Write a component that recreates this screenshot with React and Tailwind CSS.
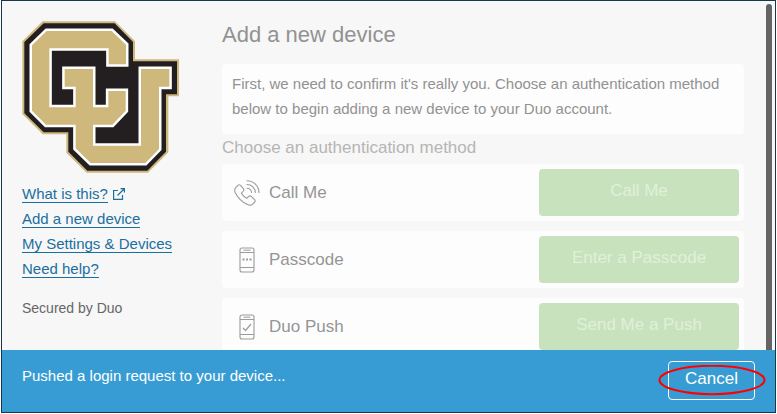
import React from 'react';

const linkClass =
  'border-b border-[#1b6f9e] text-[15px] leading-[17px] text-[#1b6f9e]';

function Logo() {
  return (
    <svg className="h-[152px] w-[158px]" viewBox="66 63 474 456" role="img" aria-label="CU">
      <path
        fill="#cfb87c"
        d="M128 64H345L405 124V178H537V289H505V457L444 518H260L199 458V403H128L67 342V124Z"
      />
      <path
        fill="#231f20"
        d="M131 70H344L399 126V184H531V283H498V455L442 512H262L205 455V397H131L73 340V126Z"
      />
      <path
        fill="#cfb87c"
        stroke="#ffffff"
        strokeWidth="15"
        paintOrder="stroke"
        d="M326 193H378V134L335 93H140L96 136V332L138 374H227V445L272 489H436L477 447V260H508V207H423V437H279V374H337L377 332V273H325V322H279V207H194V260H227V322H148V145H326Z"
      />
    </svg>
  );
}

function ExternalIcon() {
  return (
    <svg className="size-3" viewBox="0 0 12 12" fill="none" stroke="#1b6f9e" strokeWidth="1.2" aria-hidden="true">
      <path d="M5 2.5H.6V11.4H9.5V7M4.5 7.5 11 1M7.5.6H11.4V4.5" />
    </svg>
  );
}

function CallIcon() {
  return (
    <svg className="size-[26px]" viewBox="0 0 26 26" fill="none" stroke="#9b9b9b" strokeWidth="1.1" strokeLinecap="round" strokeLinejoin="round" aria-hidden="true">
      <path d="M4.2 5.2 1.7 7.7C.4 9 .5 11 1.4 13 4 18 8 22 13 24.2c2 1 4 1.3 5.4.2l2.3-2.4c.7-.7.6-1.7-.1-2.4l-3.5-3.2c-.7-.6-1.6-.6-2.3 0l-2 1.9C10.5 17.1 8.5 15.2 7.4 13.2l2-2.2c.6-.7.6-1.6 0-2.3L6.500 5.300c-.7-.7-1.6-.7-2.3-.1Z" />
      <path d="M13 .8A12 12 0 0 1 25 12.5M13 4.5A8.3 8.3 0 0 1 21.3 12.5M13 8.3A4.5 4.5 0 0 1 17.5 12.5" />
    </svg>
  );
}

function PhoneIcon({ children }) {
  return (
    <svg className="h-[26px] w-4" viewBox="0 0 16 26" fill="none" stroke="#9b9b9b" aria-hidden="true">
      <rect x="1" y="1" width="14" height="24" rx="2" strokeWidth="1.1" />
      <path d="M1 5.5H15M1 20.5H15M4.5 3.2H11.5" />
      {children}
    </svg>
  );
}

const methods = [
  { name: 'Call Me', action: 'Call Me', icon: <CallIcon /> },
  {
    name: 'Passcode',
    action: 'Enter a Passcode',
    icon: (
      <PhoneIcon>
        <path d="M3.5 12.5H5.5M7 12.5H9M10.5 12.5H12.5" strokeWidth="2" />
      </PhoneIcon>
    ),
  },
  {
    name: 'Duo Push',
    action: 'Send Me a Push',
    icon: (
      <PhoneIcon>
        <path d="M4 14 6.5 16.5 12 10" strokeWidth="1.2" />
      </PhoneIcon>
    ),
  },
];

function MethodRow({ name, action, icon }) {
  return (
    <li className="flex items-center rounded bg-[#fdfdfd] p-[5px]">
      <span className="ml-1.5 flex w-[27px] justify-center">{icon}</span>
      <span className="ml-[9px] grow text-[17px] leading-6 text-[#959595]">{name}</span>
      <button
        type="button"
        className="h-[47px] w-[200px] rounded bg-[#c8e2bd] pb-1 text-[17px] text-[#e0f0da]"
      >
        {action}
      </button>
    </li>
  );
}

export default function App() {
  return (
    <div className="h-screen bg-white px-px pb-px font-['Liberation_Sans',Arial,sans-serif]">
      <div className="flex h-full flex-col overflow-hidden border border-[#17374f] bg-[#f7f7f7]">
        <div className="flex min-h-0 grow overflow-hidden">
          <aside className="flex w-[220px] shrink-0 flex-col pt-5 pl-5">
            <Logo />
            <nav className="mt-3 flex flex-col items-start gap-[7px]">
              <span className="flex items-center gap-[5px]">
                <a href="#what" className={linkClass}>What is this?</a>
                <ExternalIcon />
              </span>
              <a href="#add" className={linkClass}>Add a new device</a>
              <a href="#settings" className={linkClass}>My Settings &amp; Devices</a>
              <a href="#help" className={linkClass}>Need help?</a>
            </nav>
            <p className="mt-5 text-sm text-[#666666]">Secured by Duo</p>
          </aside>
          <main className="min-w-0 grow pt-5">
            <h1 className="text-[22px] leading-7 text-[#929292]">Add a new device</h1>
            <p className="mt-[15px] rounded bg-[#fdfdfd] px-2.5 pt-[7px] pb-[13px] text-[15px] leading-[25px] text-[#929292]">
              First, we need to confirm it's really you. Choose an authentication method
              below to begin adding a new device to your Duo account.
            </p>
            <h2 className="mt-0.5 text-[17px] leading-6 text-[#b5b5b5]">
              Choose an authentication method
            </h2>
            <ul className="mt-1 flex flex-col gap-2.5">
              {methods.map((method) => (
                <MethodRow key={method.name} {...method} />
              ))}
            </ul>
          </main>
          <div className="ml-[22px] w-[9px] shrink-0 pt-[3px]">
            <div className="h-full w-1.5 rounded-t-full bg-[#646464]" />
          </div>
        </div>
        <footer className="flex shrink-0 items-start justify-between bg-[#379cd3] pt-[11px] pr-5 pb-3 pl-5 text-white">
          <p className="mt-[5px] text-[15px] leading-5" role="status">
            Pushed a login request to your device...
          </p>
          <div className="relative">
            <button
              type="button"
              className="h-[39px] w-[87px] rounded border border-white pb-1 text-[17px]"
            >
              Cancel
            </button>
            <svg
              className="pointer-events-none absolute -inset-x-2.5 top-1 h-8 w-[108px]"
              viewBox="0 0 108 32"
              fill="none"
              aria-hidden="true"
            >
              <ellipse cx="54" cy="15" rx="52.5" ry="14.2" stroke="#ff0000" strokeWidth="2" />
            </svg>
          </div>
        </footer>
      </div>
    </div>
  );
}
